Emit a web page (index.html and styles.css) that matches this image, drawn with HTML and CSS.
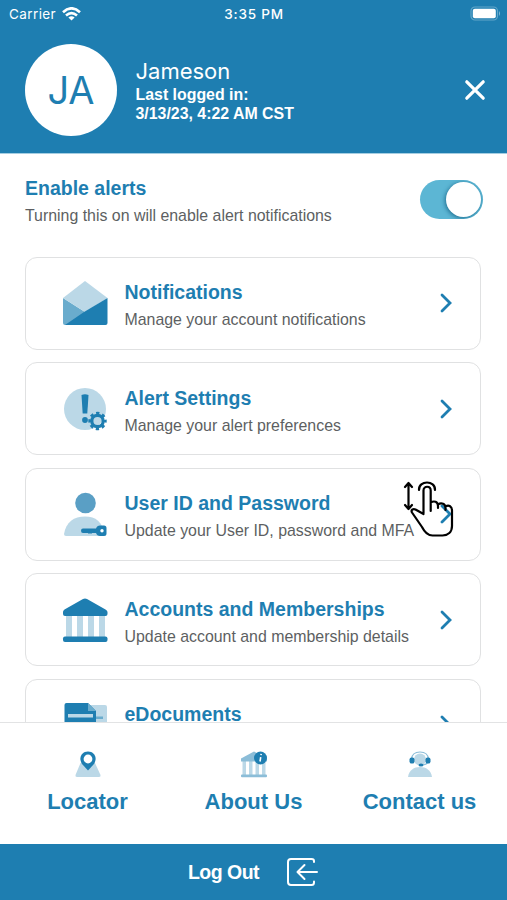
FILE: index.html
```html
<!DOCTYPE html>
<html lang="en">
<head>
  <meta charset="UTF-8" />
  <meta name="viewport" content="width=device-width, initial-scale=1.0" />
  <title>Settings</title>
  <link rel="stylesheet" href="styles.css">
</head>
<body>
  <header class="header">
    <div class="status-bar">
      <div class="carrier">
        <span>Carrier</span>
        <svg width="19" height="14" viewBox="0 0 19 14" fill="none" stroke="#fff" stroke-width="2.6">
          <path d="M1 5.200Q9.500-2.600 18 5.200"/>
          <path d="M4 8.500Q9.500 3.700 15 8.500"/>
          <path d="M9.500 13.600L6.400 10.500Q9.500 8.200 12.600 10.500Z" fill="#fff" stroke="none"/>
        </svg>
      </div>
      <div class="time">3:35 PM</div>
      <svg class="battery" width="31" height="15" viewBox="0 0 31 15">
        <rect x="1" y="1" width="26.500" height="13" rx="4" fill="none" stroke="#62a6c9" stroke-width="1.200"/>
        <rect x="2.800" y="2.800" width="23" height="9.400" rx="2" fill="#fff"/>
        <path d="M29 5Q31 7.500 29 10Z" fill="#83b9d5"/>
      </svg>
    </div>
    <div class="profile">
      <div class="avatar">JA</div>
      <div class="user">
        <div class="name">Jameson</div>
        <div class="last-login">Last logged in:<br>3/13/23, 4:22 AM CST</div>
      </div>
      <svg class="close" width="22" height="22" viewBox="0 0 22 22" fill="none" stroke="#fff" stroke-width="3.2" stroke-linecap="round">
        <path d="M2.800 2.800L19.200 19.200M19.200 2.800L2.800 19.200"/>
      </svg>
    </div>
  </header>

  <main class="content">
    <div class="alerts">
      <div>
        <h2 class="alerts-title">Enable alerts</h2>
        <p class="alerts-text">Turning this on will enable alert notifications</p>
      </div>
      <div class="toggle"><span class="knob"></span></div>
    </div>

    <div class="cards">
      <a class="card">
        <svg class="card-icon" viewBox="0 0 46 46">
          <path d="M1 18L23 32V45H3Q1 45 1 43Z" fill="#6aaccd"/>
          <path d="M23 1L45.500 18L23 32L1 18Z" fill="#bbd8e7"/>
          <path d="M45.500 18V43Q45.500 45 43.500 45H3L22 32Z" fill="#1e7eb1"/>
        </svg>
        <div class="card-text">
          <h3>Notifications</h3>
          <p>Manage your account notifications</p>
        </div>
        <svg class="chevron" viewBox="0 0 14 22"><path d="M3 3L11 11L3 19"/></svg>
      </a>

      <a class="card">
        <svg class="card-icon" viewBox="0 0 46 46">
          <circle cx="23" cy="23" r="21" fill="#bbd8e7"/>
          <path d="M19.500 9Q23 7.500 26.500 9L25.300 27.500H20.700Z" fill="#1e7eb1"/>
          <circle cx="23" cy="34" r="2.900" fill="#1e7eb1"/>
          <g fill="none" stroke="#1e7eb1">
            <circle cx="35.500" cy="35" r="5.700" stroke-width="3.200"/>
            <circle cx="35.500" cy="35" r="7.900" stroke-width="2.600" stroke-dasharray="3.300 2.905" stroke-dashoffset="1.650"/>
          </g>
        </svg>
        <div class="card-text">
          <h3>Alert Settings</h3>
          <p>Manage your alert preferences</p>
        </div>
        <svg class="chevron" viewBox="0 0 14 22"><path d="M3 3L11 11L3 19"/></svg>
      </a>

      <a class="card">
        <svg class="card-icon" viewBox="0 0 46 46">
          <circle cx="23.500" cy="12" r="10.300" fill="#5a9fc5"/>
          <path d="M2 43C4 31 12 25.500 23 25.500S40 31 43 43Q43 45 41 45H4Q2 45 2 43Z" fill="#bbd8e7"/>
          <path d="M21 37.500H34Q35 34.500 38 34.500H42Q44.500 34.500 44.500 37V42.500Q44.500 45 42 45H38Q35 45 34 42H30L29 43L28 42L27 43L26 42H21Q19 42 19 39.800T21 37.500Z" fill="#1e7eb1"/>
          <circle cx="40" cy="39.800" r="1.700" fill="#fff"/>
        </svg>
        <div class="card-text">
          <h3>User ID and Password</h3>
          <p>Update your User ID, password and MFA</p>
        </div>
        <svg class="chevron" viewBox="0 0 14 22"><path d="M3 3L11 11L3 19"/></svg>
        <svg class="hand" width="52" height="58" viewBox="0 0 52 58" fill="none" stroke="#000" stroke-width="2.2" stroke-linecap="round" stroke-linejoin="round">
          <path d="M6.500 4V28M3 7L6.500 3L10 7M3 25L6.500 29L10 25"/>
          <path d="M17 10C16.500 0 33.500 0 33 10"/>
          <path d="M21.500 33V10.500C21.500 5.500 28.700 5.500 28.700 10.500V31M28.700 22.500C32 20.500 36 21.500 36 26V28M36 24.500C39.500 22 43.500 24 43.500 28V30M43.500 26.500C47 24.500 50 26.500 50 30.500V46C50 52 46 55.500 40.500 55.500H30.500C25.500 55.500 22.500 52 20 47L10 32.500C8.500 29.500 11.500 28.500 13.500 29.500L21.500 34"/>
        </svg>
      </a>

      <a class="card">
        <svg class="card-icon" viewBox="0 0 46 46">
          <path d="M4 18H10V40H4ZM15 18H21V40H15ZM26 18H32V40H26ZM37 18H43V40H37Z" fill="#bbd8e7"/>
          <path d="M3 19Q1 19 1 17V15Q1 13.500 2.500 12.500L21 2Q23 0.800 25 2L43.500 12.500Q45.500 13.500 45.500 15V17Q45.500 19 43.500 19Z" fill="#1e7eb1"/>
          <rect x="1" y="39.500" width="44.500" height="5.500" rx="2" fill="#1e7eb1"/>
        </svg>
        <div class="card-text">
          <h3>Accounts and Memberships</h3>
          <p>Update account and membership details</p>
        </div>
        <svg class="chevron" viewBox="0 0 14 22"><path d="M3 3L11 11L3 19"/></svg>
      </a>

      <a class="card">
        <svg class="card-icon" viewBox="0 0 46 46">
          <path d="M24 3H43Q45 3 45 5V44H24Z" fill="#bbd8e7"/>
          <path d="M32 14.500H41V17H32Z" fill="#6aaccd"/>
          <path d="M4.500 1H26L34 9V44H2.500V3Q2.500 1 4.500 1Z" fill="#1e7eb1"/>
          <path d="M26 1L34 9H26Z" fill="#6aaccd"/>
          <rect x="6" y="12" width="25" height="3.500" fill="#bbd8e7"/>
        </svg>
        <div class="card-text">
          <h3>eDocuments</h3>
        </div>
        <svg class="chevron" viewBox="0 0 14 22"><path d="M3 3L11 11L3 19"/></svg>
      </a>
    </div>
  </main>

  <nav class="links">
    <a class="link">
      <svg width="28" height="28" viewBox="0 0 28 28">
        <path d="M6.500 13H21L26.500 25Q27 27 25 27H3Q1 27 1.500 25Z" fill="#bbd8e7"/>
        <path d="M14 20.500L8.500 14.500C4 9 7 1.500 14 1.500S24 9 19.500 14.500Z" fill="#1e7eb1"/>
        <circle cx="14" cy="9" r="4.400" fill="#fff"/>
      </svg>
      <span>Locator</span>
    </a>
    <a class="link">
      <svg width="28" height="28" viewBox="0 0 28 28">
        <path d="M2.500 11H6V25H2.500ZM9 11H12.500V25H9ZM15.500 11H19V25H15.500ZM22 11H25.500V25H22Z" fill="#bbd8e7"/>
        <path d="M1 11.500V8.500L14 1.500L27 8.500V11.500Z" fill="#8bbdd8"/>
        <rect x="1" y="24.500" width="26" height="2.700" rx="1" fill="#8bbdd8"/>
        <circle cx="20.500" cy="8" r="6.500" fill="#1e7eb1"/>
        <path d="M21.200 3.800L21 5.200M20.700 7.200L20 11.500" stroke="#fff" stroke-width="1.600"/>
      </svg>
      <span>About Us</span>
    </a>
    <a class="link">
      <svg width="28" height="28" viewBox="0 0 28 28">
        <path d="M2 27C3 20 8 17 14 17S25 20 26 27Z" fill="#bbd8e7"/>
        <circle cx="14" cy="9.500" r="6" fill="#bbd8e7"/>
        <path d="M5.500 9C6 4 9 2 14 2S22 4 22.500 9M22.500 11Q21 15 16 15" fill="none" stroke="#8bbdd8" stroke-width="1.200"/>
        <rect x="3.500" y="7.500" width="5" height="6" rx="2" fill="#1e7eb1"/>
        <rect x="19.500" y="7.500" width="5" height="6" rx="2" fill="#1e7eb1"/>
        <ellipse cx="15" cy="15" rx="2.500" ry="1.600" fill="#1e7eb1"/>
      </svg>
      <span>Contact us</span>
    </a>
  </nav>

  <footer class="logout">
    <span>Log Out</span>
    <svg width="33" height="30" viewBox="0 0 33 30" fill="none" stroke="#fff" stroke-width="2" stroke-linecap="round" stroke-linejoin="round">
      <path d="M28 5V4Q28 2 25.500 2H5Q2 2 2 5V25Q2 28 5 28H25.500Q28 28 28 25.500V24.500"/>
      <path d="M31 15H12M18.500 8L11.500 15L18.500 22"/>
    </svg>
  </footer>
</body>
</html>
```

FILE: styles.css
```css
* {
  box-sizing: border-box;
}
body {
  margin: 0;
  height: 900px;
  display: flex;
  flex-direction: column;
  overflow: hidden;
  background: #fff;
  color: #5d5f62;
  font-family: "Liberation Sans", Arial, sans-serif;
}
h2, h3, p {
  margin: 0;
}
svg {
  display: block;
  flex: none;
}
.header {
  height: 154px;
  flex: none;
  background: #1e7eb1;
  color: #fff;
  border-bottom: 1px solid #a5cee2;
}
.status-bar {
  display: grid;
  grid-template-columns: 1fr auto 1fr;
  align-items: center;
  height: 27px;
  padding: 0 6px 0 9px;
  font-family: Inter, sans-serif;
  font-size: 13.5px;
}
.carrier {
  display: flex;
  align-items: center;
  gap: 6px;
  letter-spacing: 0.4px;
}
.time {
  margin-right: 2px;
  font-weight: 500;
  letter-spacing: 0.8px;
}
.battery {
  justify-self: end;
}
.profile {
  display: flex;
  align-items: center;
  height: 94px;
  margin-top: 16px;
  padding: 0 21px 0 25px;
}
.avatar {
  width: 92px;
  height: 92px;
  border-radius: 50%;
  background: #fff;
  color: #1e7eb1;
  display: flex;
  align-items: center;
  justify-content: center;
  font-family: Inter, sans-serif;
  font-size: 38px;
  font-weight: 400;
}
.user {
  flex: 1;
  margin-left: 18.5px;
}
.name {
  font-family: Inter, sans-serif;
  font-size: 22px;
  font-weight: 400;
  line-height: 28px;
}
.last-login {
  font-size: 15.9px;
  font-weight: bold;
  line-height: 19.5px;
}
.content {
  flex: 1;
  min-height: 0;
  overflow: hidden;
  padding: 21px 24px 0 25px;
}
.alerts {
  display: flex;
  justify-content: space-between;
  height: 81.5px;
}
.alerts-title {
  color: #1e7eb1;
  font-size: 19.5px;
  line-height: 27px;
}
.alerts-text {
  font-size: 15.9px;
  line-height: 27px;
}
.toggle {
  width: 63px;
  height: 39px;
  margin-top: 5px;
  padding: 2px;
  border-radius: 20px;
  background: #5cb6d4;
  overflow: hidden;
}
.knob {
  display: block;
  width: 35px;
  height: 35px;
  margin-left: auto;
  border-radius: 50%;
  background: #fff;
  box-shadow: -1px 1px 4px #206f91;
}
.cards {
  display: flex;
  flex-direction: column;
  gap: 12.5px;
  width: 456px;
}
.card {
  position: relative;
  flex: none;
  display: flex;
  align-items: center;
  height: 93px;
  padding: 0 27px 0 36px;
  border: 1.5px solid #e0e1e2;
  border-radius: 12px;
}
.card-icon {
  width: 46px;
  height: 46px;
}
.card-text {
  flex: 1;
  height: 60px;
  margin-left: 16.5px;
  padding-top: 6px;
  white-space: nowrap;
}
.card h3 {
  color: #1e7eb1;
  font-size: 19.5px;
  line-height: 27px;
}
.card p {
  font-size: 15.9px;
  line-height: 27px;
}
.chevron {
  width: 14px;
  height: 22px;
  fill: none;
  stroke: #1e7eb1;
  stroke-width: 2.8;
  stroke-linecap: round;
}
.hand {
  position: absolute;
  left: 376px;
  top: 11px;
}
.links {
  display: grid;
  grid-template-columns: 155px 155px 155px;
  justify-content: center;
  column-gap: 11px;
  flex: none;
  height: 122px;
  padding-top: 27px;
  border-top: 1px solid #e2e3e4;
}
.link {
  display: flex;
  flex-direction: column;
  align-items: center;
  color: #1e7eb1;
  font-size: 22px;
  font-weight: bold;
  line-height: 28px;
  gap: 10px;
}
.logout {
  display: flex;
  align-items: center;
  justify-content: center;
  gap: 27px;
  flex: none;
  height: 56px;
  background: #1e7eb1;
  color: #fff;
  font-size: 19.5px;
  font-weight: bold;
  letter-spacing: -0.5px;
}
```
